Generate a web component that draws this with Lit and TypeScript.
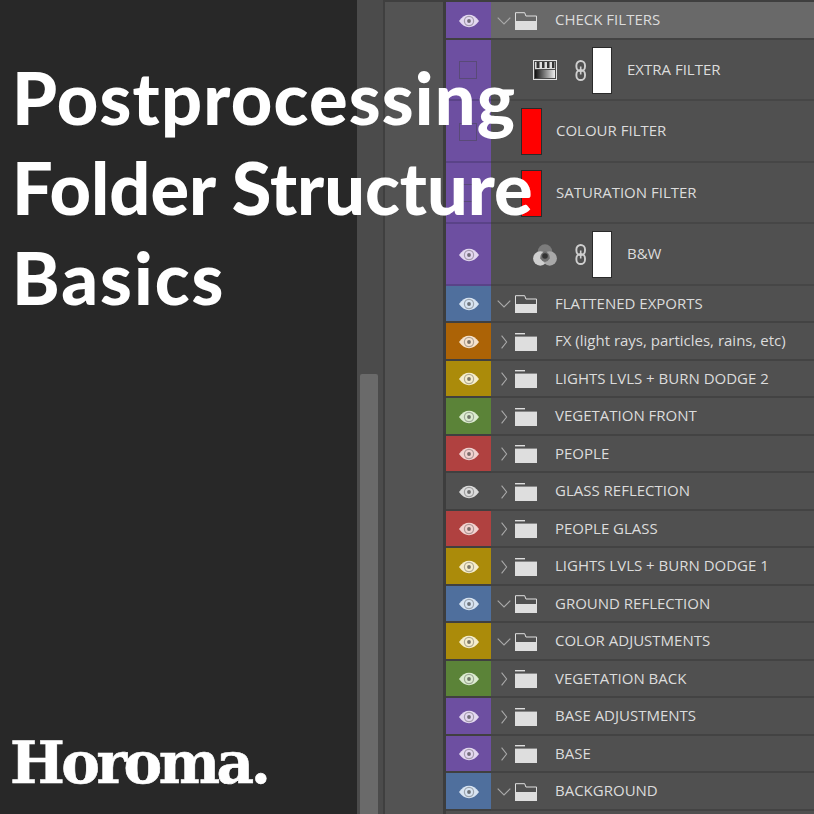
import { LitElement, html, css, svg } from "lit";
import { customElement } from "lit/decorators.js";

type Color = "purple" | "blue" | "orange" | "yellow" | "green" | "red" | "grey";
interface Row { label: string; color: Color; open?: boolean; selected?: boolean }

const TINT: Record<Color, string> = {
  purple: "#e3d8f0", blue: "#d8e4f2", orange: "#f5e2cc", yellow: "#f5edcc",
  green: "#dcebd0", red: "#f2d2d0", grey: "#dcdcdc",
};

const FOLDERS: Row[] = [
  { label: "FLATTENED EXPORTS", color: "blue", open: true },
  { label: "FX (light rays, particles, rains, etc)", color: "orange" },
  { label: "LIGHTS LVLS + BURN DODGE 2", color: "yellow" },
  { label: "VEGETATION FRONT", color: "green" },
  { label: "PEOPLE", color: "red" },
  { label: "GLASS REFLECTION", color: "grey" },
  { label: "PEOPLE GLASS", color: "red" },
  { label: "LIGHTS LVLS + BURN DODGE 1", color: "yellow" },
  { label: "GROUND REFLECTION", color: "blue", open: true },
  { label: "COLOR ADJUSTMENTS", color: "yellow", open: true },
  { label: "VEGETATION BACK", color: "green" },
  { label: "BASE ADJUSTMENTS", color: "purple" },
  { label: "BASE", color: "purple" },
  { label: "BACKGROUND", color: "blue", open: true },
];

const eye = (c: Color) => svg`<svg class="eye" width="20" height="14" viewBox="0 0 20 14" style="color:${TINT[c]}">
  <path fill="currentColor" d="M0 7C3 2.6 6.3 .8 10 .8S17 2.6 20 7c-3 4.4-6.3 6.2-10 6.2S3 11.4 0 7Z"/>
  <circle cx="10" cy="7" r="4.6" fill="none" stroke="rgba(0,0,0,.28)" stroke-width="1.2"/>
  <circle cx="10" cy="7" r="1.9" fill="rgba(0,0,0,.5)"/>
</svg>`;

const chevron = (open?: boolean) => open
  ? svg`<svg class="chev" width="14" height="8" viewBox="0 0 14 8"><path d="M.7.7 7 7 13.3.7" fill="none" stroke="#a9a9a9" stroke-width="1.1"/></svg>`
  : svg`<svg class="chev" width="14" height="14" viewBox="0 0 14 14"><path d="M4.6.7 9.6 7l-5 6.3" fill="none" stroke="#a9a9a9" stroke-width="1.1"/></svg>`;

const folder = (open?: boolean) => open
  ? svg`<svg class="folder" width="22" height="18" viewBox="0 0 22 18">
      <path d="M.5 17V.7h9.2l1.2 3.3h10.6V17Z" fill="none" stroke="#dedede"/>
      <rect x="0" y="9" width="22" height="9" fill="#dedede"/>
    </svg>`
  : svg`<svg class="folder" width="22" height="18" viewBox="0 0 22 18">
      <rect x="0" y="0" width="10" height="1.4" fill="#dedede"/>
      <rect x="0" y="3.6" width="22" height="14.4" fill="#dedede"/>
    </svg>`;

const gradientIcon = svg`<svg class="adj" width="24" height="20" viewBox="0 0 24 20">
  <defs><linearGradient id="gr"><stop offset="0" stop-color="#111"/><stop offset="1" stop-color="#eee"/></linearGradient></defs>
  <rect x=".5" y=".5" width="23" height="19" fill="#4a4a4a" stroke="#e2e2e2"/>
  <path d="M2 2h20v7H2z" fill="#ddd"/>
  <path d="M3.5 2h3v6h-3zM9 2h2.5v6H9zM14 2h2.5v6H14zM19 2h2.5v6H19z" fill="#333"/>
  <rect x="2" y="10" width="20" height="8" fill="url(#gr)"/>
</svg>`;

const mixerIcon = svg`<svg class="adj" width="24" height="22" viewBox="0 0 24 22">
  <circle cx="12" cy="7.5" r="7.2" fill="#7c7c7c"/>
  <circle cx="7.3" cy="14.5" r="7.2" fill="#cfcfcf"/>
  <circle cx="16.7" cy="14.5" r="7.2" fill="#a8a8a8"/>
  <path d="M12 7.2a7.2 7.2 0 0 1 4.7 7.3 7.2 7.2 0 0 1-4.7 3.6 7.2 7.2 0 0 1-4.7-3.6A7.2 7.2 0 0 1 12 7.2Z" fill="#6e6e6e"/>
  <circle cx="12" cy="12" r="2.8" fill="#333"/>
</svg>`;

const linkIcon = svg`<svg class="link" width="12" height="21" viewBox="0 0 12 21" fill="none" stroke="#cfcfcf" stroke-width="1.9">
  <rect x="1.4" y="1" width="8.6" height="10" rx="4.3"/>
  <rect x="1.4" y="10" width="8.6" height="10" rx="4.3"/>
  <path d="M5.7 6.5v8" stroke-width="1.6"/>
</svg>`;

@customElement("app-root")
export class AppRoot extends LitElement {
  static styles = css`
    :host { display: block; width: 814px; height: 814px; overflow: hidden; background: #505050; }
    .page { display: flex; height: 814px; }
    .intro {
      width: 357px; flex: none; box-sizing: border-box; background: #282828;
      padding: 52px 0 16px 12px; display: flex; flex-direction: column; justify-content: space-between;
      position: relative; z-index: 2;
    }
    .title { font: 900 72px/90px "Lato", sans-serif; color: #fff; white-space: nowrap; }
    .l1 { letter-spacing: 1.2px; }
    .l3 { letter-spacing: 2px; }
    .brand {
      font: 700 58px/70px "DejaVu Serif", serif; color: #fff; letter-spacing: -3.5px; margin-left: -2px;
      -webkit-text-stroke: 0.6px #fff;
    }
    .track {
      width: 23px; flex: none; background: #4b4b4b; border-right: 2px solid #3f3f3f;
      display: flex; flex-direction: column; justify-content: flex-end; padding-left: 3px;
    }
    .thumb { width: 18px; height: 440px; background: #6a6a6a; border-radius: 2px 2px 0 0; }
    .gutter {
      width: 58px; flex: none; background: #535353; border-top: 2px solid #3f3f3f;
      border-right: 3px solid #3d3d3d;
    }
    .layers { flex: 1; min-width: 0; display: flex; flex-direction: column; }
    .cap { height: 2px; background: #3f3f3f; flex: none; }
    .row {
      height: 37.5px; flex: none; box-sizing: border-box; display: flex; align-items: center;
      background: #505050; border-bottom: 2px solid #434343; padding-top: 2px;
      font: 400 15px/1 "Open Sans", sans-serif; color: #dcdcdc; white-space: nowrap;
    }
    .row.tall { height: 61.5px; border-bottom-color: #464646; }
    .row.selected { background: #696969; }
    .vis {
      width: 45px; flex: none; align-self: stretch; margin: -2px 0 -2px; padding-top: 2px; box-sizing: border-box;
      display: flex; align-items: center; justify-content: center; border-bottom: 2px solid #404040;
    }
    .tall .vis { border-bottom-color: #5a4388; }
    .purple { background: #6d4fa1; }
    .blue { background: #4f6f9d; }
    .orange { background: #ac6306; }
    .yellow { background: #ab8b0a; }
    .green { background: #5b8338; }
    .red { background: #b04140; }
    .grey { background: #505050; }
    .box { width: 18px; height: 18px; box-sizing: border-box; border: 1px solid #594a78; margin-right: 2px; }
    .chev { margin-left: 6px; flex: none; }
    .folder { margin-left: 4px; flex: none; }
    .name { margin-top: -2px; }
    .row .name { margin-left: 18px; }
    .adj { margin-left: 42px; flex: none; }
    .link { margin-left: 18px; flex: none; }
    .mask { width: 20px; height: 47px; box-sizing: border-box; background: #fff; border: 1px solid #2a2a2a; margin-left: 5px; flex: none; }
    .fill { width: 21px; height: 47px; box-sizing: border-box; background: #f00; border: 1px solid #2a2a2a; margin-left: 30px; flex: none; }
    .tall .name { margin-left: 15px; }
    .fill + .name { margin-left: 14px; }
  `;

  render() {
    return html`<div class="page">
      <section class="intro">
        <div class="title"><span class="l1">Postprocessing</span><br />Folder Structure<br /><span class="l3">Basics</span></div>
        <div class="brand">Horoma.</div>
      </section>
      <div class="track"><div class="thumb"></div></div>
      <div class="gutter"></div>
      <div class="layers">
        <div class="cap"></div>
        <div class="row selected">
          <div class="vis purple">${eye("purple")}</div>
          ${chevron(true)}${folder(true)}<span class="name">CHECK FILTERS</span>
        </div>
        <div class="row tall">
          <div class="vis purple"><div class="box"></div></div>
          ${gradientIcon}${linkIcon}<div class="mask"></div><span class="name">EXTRA FILTER</span>
        </div>
        <div class="row tall">
          <div class="vis purple"><div class="box"></div></div>
          <div class="fill"></div><span class="name">COLOUR FILTER</span>
        </div>
        <div class="row tall">
          <div class="vis purple"><div class="box"></div></div>
          <div class="fill"></div><span class="name">SATURATION FILTER</span>
        </div>
        <div class="row tall">
          <div class="vis purple">${eye("purple")}</div>
          ${mixerIcon}${linkIcon}<div class="mask"></div><span class="name">B&amp;W</span>
        </div>
        ${FOLDERS.map((r) => html`<div class="row">
          <div class="vis ${r.color}">${eye(r.color)}</div>
          ${chevron(r.open)}${folder(r.open)}<span class="name">${r.label}</span>
        </div>`)}
      </div>
    </div>`;
  }
}
